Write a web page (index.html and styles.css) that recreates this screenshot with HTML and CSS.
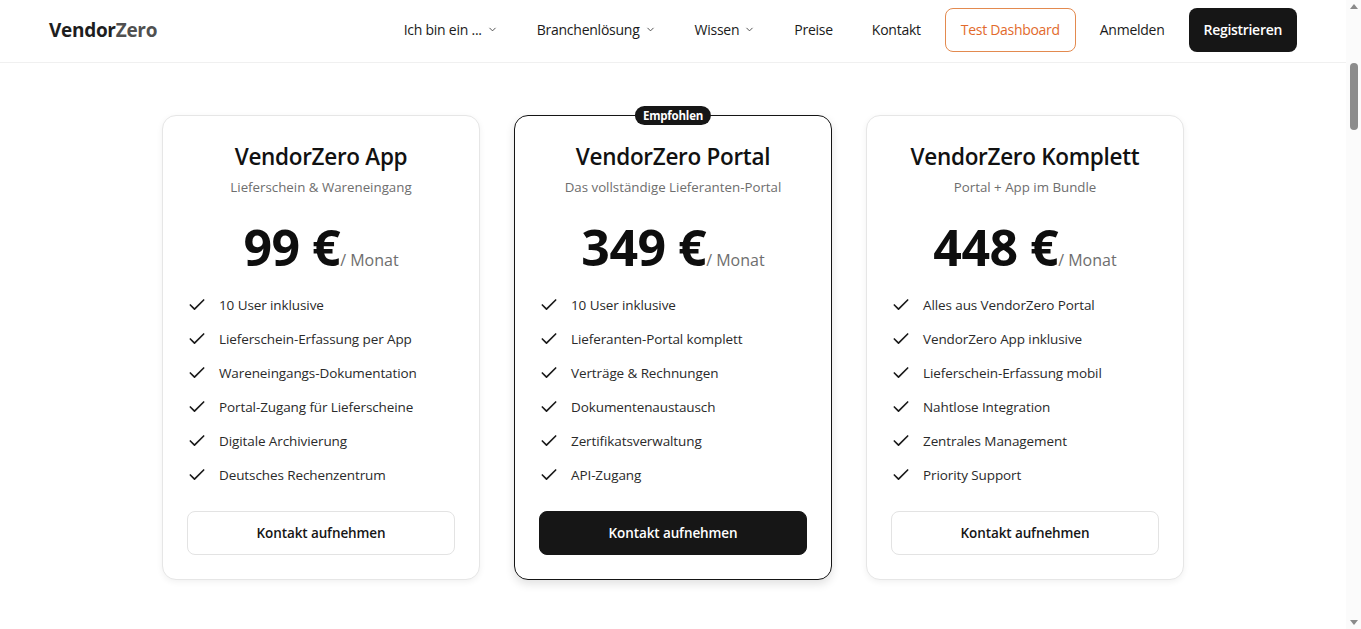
FILE: index.html
```html
<!DOCTYPE html>
<html lang="de">
<head>
<meta charset="utf-8">
<title>VendorZero – Preise</title>
<link rel="stylesheet" href="styles.css">
</head>
<body>
<div class="page">
<header class="topbar">
  <div class="logo"><span class="logo-a">Vendor</span><span class="logo-b">Zero</span></div>
  <nav class="nav">
    <a class="nav-item">Ich bin ein ... <svg class="chev" viewBox="0 0 24 24"><path d="m6 9 6 6 6-6"/></svg></a>
    <a class="nav-item">Branchenlösung <svg class="chev" viewBox="0 0 24 24"><path d="m6 9 6 6 6-6"/></svg></a>
    <a class="nav-item">Wissen <svg class="chev" viewBox="0 0 24 24"><path d="m6 9 6 6 6-6"/></svg></a>
    <a class="nav-item">Preise</a>
    <a class="nav-item nav-tight">Kontakt</a>
    <a class="btn-outline-orange">Test Dashboard</a>
    <a class="nav-item nav-tight">Anmelden</a>
    <a class="btn-dark">Registrieren</a>
  </nav>
</header>

<main class="pricing">
  <div class="cards">
    <section class="card">
      <h2 class="card-title">VendorZero App</h2>
      <p class="card-sub">Lieferschein &amp; Wareneingang</p>
      <div class="price"><span class="amount">99 €</span><span class="per">/ Monat</span></div>
      <ul class="features">
        <li><svg class="check" viewBox="0 0 24 24"><path d="M20 6 9 17 4 12"/></svg>10 User inklusive</li>
        <li><svg class="check" viewBox="0 0 24 24"><path d="M20 6 9 17 4 12"/></svg>Lieferschein-Erfassung per App</li>
        <li><svg class="check" viewBox="0 0 24 24"><path d="M20 6 9 17 4 12"/></svg>Wareneingangs-Dokumentation</li>
        <li><svg class="check" viewBox="0 0 24 24"><path d="M20 6 9 17 4 12"/></svg>Portal-Zugang für Lieferscheine</li>
        <li><svg class="check" viewBox="0 0 24 24"><path d="M20 6 9 17 4 12"/></svg>Digitale Archivierung</li>
        <li><svg class="check" viewBox="0 0 24 24"><path d="M20 6 9 17 4 12"/></svg>Deutsches Rechenzentrum</li>
      </ul>
      <a class="card-btn">Kontakt aufnehmen</a>
    </section>

    <section class="card card-featured">
      <span class="badge">Empfohlen</span>
      <h2 class="card-title">VendorZero Portal</h2>
      <p class="card-sub">Das vollständige Lieferanten-Portal</p>
      <div class="price"><span class="amount">349 €</span><span class="per">/ Monat</span></div>
      <ul class="features">
        <li><svg class="check" viewBox="0 0 24 24"><path d="M20 6 9 17 4 12"/></svg>10 User inklusive</li>
        <li><svg class="check" viewBox="0 0 24 24"><path d="M20 6 9 17 4 12"/></svg>Lieferanten-Portal komplett</li>
        <li><svg class="check" viewBox="0 0 24 24"><path d="M20 6 9 17 4 12"/></svg>Verträge &amp; Rechnungen</li>
        <li><svg class="check" viewBox="0 0 24 24"><path d="M20 6 9 17 4 12"/></svg>Dokumentenaustausch</li>
        <li><svg class="check" viewBox="0 0 24 24"><path d="M20 6 9 17 4 12"/></svg>Zertifikatsverwaltung</li>
        <li><svg class="check" viewBox="0 0 24 24"><path d="M20 6 9 17 4 12"/></svg>API-Zugang</li>
      </ul>
      <a class="card-btn card-btn-dark">Kontakt aufnehmen</a>
    </section>

    <section class="card">
      <h2 class="card-title">VendorZero Komplett</h2>
      <p class="card-sub">Portal + App im Bundle</p>
      <div class="price"><span class="amount">448 €</span><span class="per">/ Monat</span></div>
      <ul class="features">
        <li><svg class="check" viewBox="0 0 24 24"><path d="M20 6 9 17 4 12"/></svg>Alles aus VendorZero Portal</li>
        <li><svg class="check" viewBox="0 0 24 24"><path d="M20 6 9 17 4 12"/></svg>VendorZero App inklusive</li>
        <li><svg class="check" viewBox="0 0 24 24"><path d="M20 6 9 17 4 12"/></svg>Lieferschein-Erfassung mobil</li>
        <li><svg class="check" viewBox="0 0 24 24"><path d="M20 6 9 17 4 12"/></svg>Nahtlose Integration</li>
        <li><svg class="check" viewBox="0 0 24 24"><path d="M20 6 9 17 4 12"/></svg>Zentrales Management</li>
        <li><svg class="check" viewBox="0 0 24 24"><path d="M20 6 9 17 4 12"/></svg>Priority Support</li>
      </ul>
      <a class="card-btn">Kontakt aufnehmen</a>
    </section>
  </div>
</main>
</div>

<div class="scrollbar" aria-hidden="true">
  <span class="sb-arrow sb-up"></span>
  <span class="sb-thumb"></span>
  <span class="sb-arrow sb-down"></span>
</div>
</body>
</html>
```

FILE: styles.css
```css
* {
  box-sizing: border-box;
}
html, body {
  height: 100%;
  overflow: hidden;
}
body {
  margin: 0;
  background: #ffffff;
  color: #111111;
  font-family: "Open Sans", "Noto Sans", "Liberation Sans", sans-serif;
}
a {
  text-decoration: none;
  color: inherit;
  cursor: pointer;
}
.page {
  margin-right: 15px;
}

/* header */
.topbar {
  height: 63px;
  border-bottom: 1px solid #f0f0f0;
  display: flex;
  align-items: center;
  justify-content: space-between;
  padding: 0 49px;
}
.logo {
  font-size: 19px;
  font-weight: 700;
  letter-spacing: -0.3px;
  margin-top: -2px;
}
.logo-a { color: #1e1e1e; }
.logo-b { color: #505050; }
.nav {
  display: flex;
  align-items: center;
  font-size: 14px;
  font-weight: 500;
  color: #1a1a1a;
  margin-top: -3px;
}
.nav-item {
  display: flex;
  align-items: center;
  gap: 5px;
  margin-right: 39px;
  letter-spacing: -0.25px;
}
.nav-tight { margin-right: 24px; }
.chev {
  width: 11px;
  height: 11px;
  fill: none;
  stroke: #444;
  stroke-width: 2;
  stroke-linecap: round;
  stroke-linejoin: round;
}
.btn-outline-orange {
  height: 44px;
  padding: 0 15px;
  display: flex;
  align-items: center;
  border: 1px solid #e38a4f;
  border-radius: 8px;
  color: #e26a2c;
  margin-right: 24px;
  letter-spacing: -0.3px;
}
.btn-dark {
  height: 44px;
  padding: 0 15px;
  display: flex;
  align-items: center;
  background: #161616;
  color: #ffffff;
  border-radius: 8px;
  font-weight: 600;
  letter-spacing: -0.3px;
}

/* pricing */
.pricing {
  padding-top: 52px;
  display: flex;
  justify-content: center;
}
.cards {
  width: 1022px;
  display: grid;
  grid-template-columns: repeat(3, 1fr);
  gap: 34px;
}
.card {
  position: relative;
  border: 1px solid #e6e6e6;
  border-radius: 14px;
  padding: 24px;
  box-shadow: 0 2px 6px rgba(0, 0, 0, 0.06);
  background: #fff;
  display: flex;
  flex-direction: column;
  align-items: center;
}
.card-featured {
  border-color: #151515;
  box-shadow: 0 4px 10px rgba(0, 0, 0, 0.12);
}
.badge {
  position: absolute;
  top: -10px;
  left: 50%;
  transform: translateX(-50%);
  background: #161616;
  color: #fff;
  font-size: 11.5px;
  font-weight: 700;
  line-height: 19px;
  padding: 0 8px;
  border-radius: 10px;
  letter-spacing: -0.2px;
}
.card-title {
  margin: 0;
  font-size: 22.5px;
  font-weight: 600;
  line-height: 34px;
  letter-spacing: -0.3px;
  color: #111;
}
.card-sub {
  margin: 3px 0 0;
  font-size: 13.3px;
  line-height: 20px;
  color: #6e6e6e;
}
.price {
  margin-top: 20px;
  display: flex;
  align-items: baseline;
  height: 60px;
}
.amount {
  font-size: 50px;
  font-weight: 700;
  line-height: 60px;
  letter-spacing: -0.5px;
  color: #0e0e0e;
}
.per {
  font-size: 16px;
  color: #6e6e6e;
}
.features {
  list-style: none;
  margin: 18px 0 0;
  padding: 0;
  width: 100%;
  display: flex;
  flex-direction: column;
  gap: 14px;
}
.features li {
  display: flex;
  align-items: center;
  gap: 12px;
  font-size: 13.5px;
  line-height: 20px;
  color: #2a2a2a;
  letter-spacing: -0.1px;
}
.check {
  width: 20px;
  height: 20px;
  flex: none;
  fill: none;
  stroke: #1a1a1a;
  stroke-width: 2;
  stroke-linecap: round;
  stroke-linejoin: round;
}
.card-btn {
  margin-top: 26px;
  width: 100%;
  height: 44px;
  display: flex;
  align-items: center;
  justify-content: center;
  border: 1px solid #e3e3e3;
  border-radius: 8px;
  font-size: 13.5px;
  font-weight: 600;
  color: #161616;
  letter-spacing: -0.1px;
}
.card-btn-dark {
  background: #161616;
  border-color: #161616;
  color: #fff;
}

/* window scrollbar (drawn) */
.scrollbar {
  position: fixed;
  top: 0;
  right: 0;
  width: 15px;
  height: 100%;
  background: #fbfbfb;
  display: flex;
  flex-direction: column;
  align-items: center;
}
.sb-arrow {
  width: 0;
  height: 0;
  border-left: 4px solid transparent;
  border-right: 4px solid transparent;
}
.sb-up {
  margin-top: 4px;
  border-bottom: 5px solid #8a8a8a;
}
.sb-thumb {
  margin-top: 54px;
  width: 8px;
  height: 67px;
  border-radius: 4px;
  background: #8c8c8c;
}
.sb-down {
  margin-top: auto;
  margin-bottom: 4px;
  border-top: 5px solid #8a8a8a;
}
```
